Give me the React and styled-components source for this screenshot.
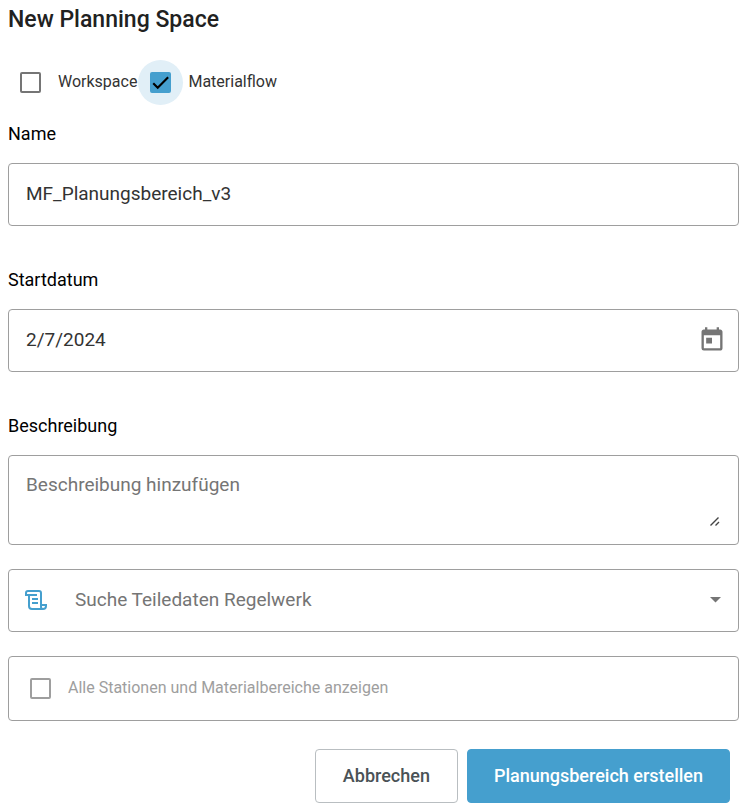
import { useState } from "react";
import styled, { createGlobalStyle } from "styled-components";
import { MdToday } from "react-icons/md";

const GlobalStyle = createGlobalStyle`
  * {
    box-sizing: border-box;
  }

  body {
    margin: 0;
    background: white;
    color: black;
    font-family: Roboto, "Liberation Sans", sans-serif;
  }
`;

const Form = styled.form`
  display: flex;
  flex-direction: column;
  padding: 8px 6px 5px 8px;
`;

const Title = styled.h1`
  margin: 0 0 28px;
  font-size: 23px;
  font-weight: 500;
  line-height: 24px;
  color: #212121;
`;

const TypeRow = styled.div`
  display: flex;
  align-items: center;
  gap: 1px;
  margin-bottom: 17px;
`;

const CheckLabel = styled.label`
  display: flex;
  align-items: center;
  gap: 5px;
  font-size: 16px;
  line-height: 24px;
  color: ${(props) => (props.$muted ? "#9e9e9e" : "#333333")};
`;

const CheckText = styled.span`
  padding-bottom: 2px;
`;

const Halo = styled.span`
  position: relative;
  display: grid;
  place-items: center;
  width: 45px;
  height: 45px;
  border-radius: 50%;
  background: ${(props) => (props.$active ? "#e1eff7" : "transparent")};

  svg {
    position: absolute;
    width: 17px;
    height: 17px;
    pointer-events: none;
  }
`;

const Box = styled.input`
  appearance: none;
  width: 21px;
  height: 21px;
  margin: 0;
  border: 2px solid ${(props) => (props.$muted ? "#9e9e9e" : "#757575")};
  border-radius: 2px;
  cursor: pointer;

  &:checked {
    border-color: #459fce;
    background: #459fce;
  }
`;

const Field = styled.div`
  display: flex;
  flex-direction: column;
  gap: 17px;
  margin-bottom: ${(props) => (props.$last ? "24px" : "42px")};
`;

const FieldLabel = styled.label`
  font-size: 18px;
  line-height: 24px;
`;

const Outline = styled.div`
  display: flex;
  align-items: center;
  position: relative;
  min-height: 63px;
  padding: 15px 17px 17px;
  border: 1px solid #9e9e9e;
  border-radius: 4px;

  input,
  textarea,
  select {
    flex: 1;
    min-width: 0;
    padding: 0;
    border: none;
    outline: none;
    background: transparent;
    color: #333333;
    font-family: inherit;
    font-size: 19px;
    line-height: 24px;
  }

  textarea {
    height: 56px;
    padding-top: 2px;
    resize: vertical;
  }

  textarea::-webkit-resizer {
    background: transparent;
  }

  select {
    appearance: none;
    color: #757575;
  }

  ::placeholder {
    color: #757575;
  }
`;

const Grip = styled.svg`
  position: absolute;
  right: 18px;
  bottom: 18px;
  pointer-events: none;
`;

const SelectOutline = styled(Outline)`
  gap: 28px;
  padding-left: 16px;
  margin-bottom: 24px;
`;

const OptionBox = styled.div`
  display: flex;
  align-items: center;
  min-height: 65px;
  margin-bottom: 28px;
  padding: 0 9px;
  border: 1px solid #9e9e9e;
  border-radius: 4px;
`;

const IconButton = styled.button`
  display: flex;
  margin-right: -5px;
  padding: 0;
  border: none;
  background: none;
  color: #757575;
  cursor: pointer;
`;

const Actions = styled.div`
  display: flex;
  justify-content: flex-end;
  gap: 9px;
  padding-right: 9px;
`;

const Button = styled.button`
  min-width: 143px;
  height: 54px;
  padding: 0 26px 2px;
  border: 1px solid ${(props) => (props.$primary ? "#459fce" : "#b9bec1")};
  border-radius: 4px;
  background: ${(props) => (props.$primary ? "#459fce" : "white")};
  color: ${(props) => (props.$primary ? "white" : "#4a5256")};
  font-family: inherit;
  font-size: 18px;
  font-weight: 500;
  cursor: pointer;
`;

const ScrollIcon = () => (
  <svg width="22" height="20" viewBox="0 0 22 20" fill="none" stroke="#459fce" strokeWidth="2">
    <path d="M12 5H1V3a2 2 0 0 1 2-2h11a2 2 0 0 1 2 2v12" />
    <path d="M4 5v11a3 3 0 0 0 3 3h11a3 3 0 0 0 3-3V15h-5v2a2 2 0 0 0 2 2" />
    <path d="M7 9h6M7 13h6" />
  </svg>
);

const Checkbox = ({ label, muted, checked, onChange }) => (
  <CheckLabel $muted={muted}>
    <Halo $active={checked}>
      <Box type="checkbox" $muted={muted} checked={checked} onChange={onChange} />
      {checked && (
        <svg viewBox="0 0 24 24" fill="none" stroke="black" strokeWidth="3">
          <path d="M1.73 12.91l6.37 6.37L22.79 4.59" />
        </svg>
      )}
    </Halo>
    <CheckText>{label}</CheckText>
  </CheckLabel>
);

const App = () => {
  const [workspace, setWorkspace] = useState(false);
  const [materialflow, setMaterialflow] = useState(true);
  const [showAll, setShowAll] = useState(false);

  return (
    <>
      <GlobalStyle />
      <Form onSubmit={(e) => e.preventDefault()}>
        <Title>New Planning Space</Title>
        <TypeRow>
          <Checkbox label="Workspace" checked={workspace} onChange={() => setWorkspace(!workspace)} />
          <Checkbox label="Materialflow" checked={materialflow} onChange={() => setMaterialflow(!materialflow)} />
        </TypeRow>

        <Field>
          <FieldLabel htmlFor="name">Name</FieldLabel>
          <Outline>
            <input id="name" type="text" defaultValue="MF_Planungsbereich_v3" />
          </Outline>
        </Field>

        <Field>
          <FieldLabel htmlFor="start">Startdatum</FieldLabel>
          <Outline>
            <input id="start" type="text" defaultValue="2/7/2024" />
            <IconButton type="button" aria-label="Kalender">
              <MdToday size={28} />
            </IconButton>
          </Outline>
        </Field>

        <Field $last>
          <FieldLabel htmlFor="description">Beschreibung</FieldLabel>
          <Outline>
            <textarea id="description" placeholder="Beschreibung hinzufügen" />
            <Grip width="10" height="9" viewBox="0 0 10 9" stroke="#444444" strokeWidth="1.4">
              <path d="M0.5 8.5L8.5 0.5M5.5 8.5L9 5" />
            </Grip>
          </Outline>
        </Field>

        <SelectOutline>
          <ScrollIcon />
          <select aria-label="Suche Teiledaten Regelwerk" defaultValue="">
            <option value="">Suche Teiledaten Regelwerk</option>
          </select>
          <svg width="11" height="6" viewBox="0 0 11 6" fill="#757575">
            <path d="M0 0h11L5.5 5.5z" />
          </svg>
        </SelectOutline>

        <OptionBox>
          <Checkbox
            muted
            label="Alle Stationen und Materialbereiche anzeigen"
            checked={showAll}
            onChange={() => setShowAll(!showAll)}
          />
        </OptionBox>

        <Actions>
          <Button type="button">Abbrechen</Button>
          <Button type="submit" $primary>Planungsbereich erstellen</Button>
        </Actions>
      </Form>
    </>
  );
};

export default App;
